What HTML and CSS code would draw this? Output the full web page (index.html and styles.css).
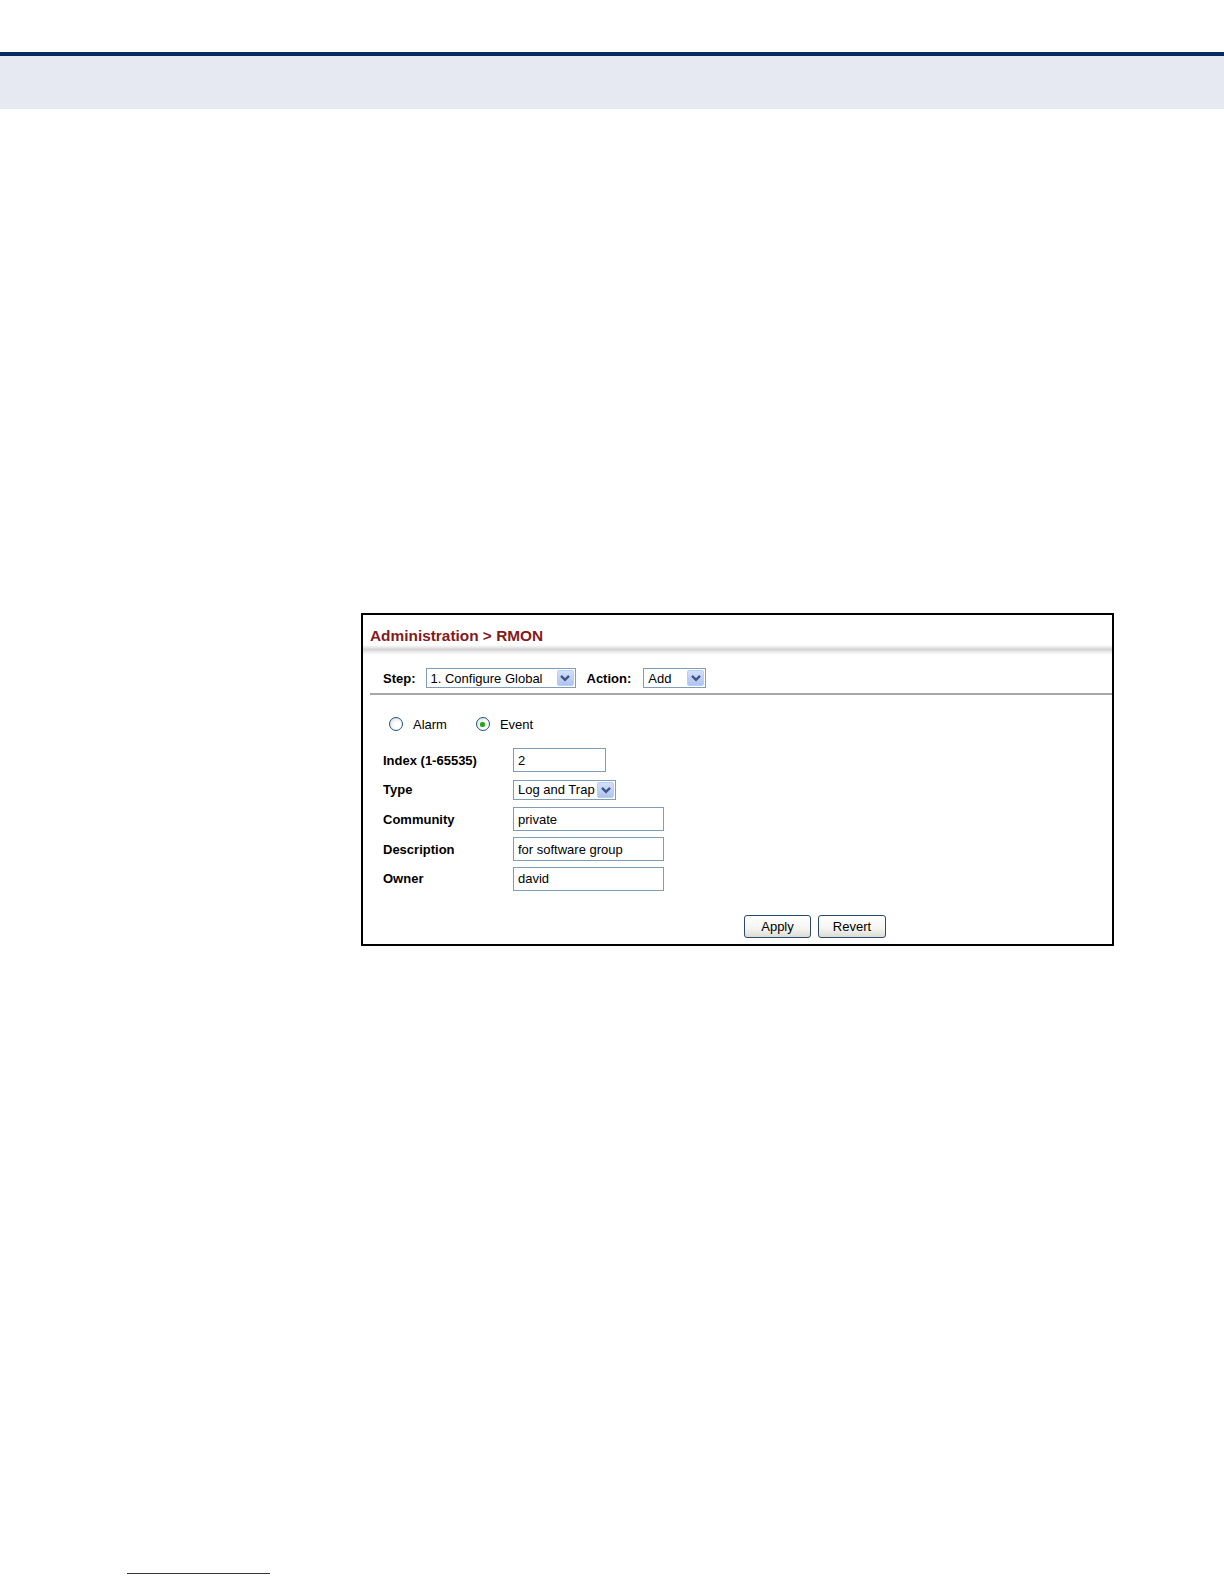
FILE: index.html
```html
<!DOCTYPE html>
<html>
<head>
<meta charset="utf-8">
<link rel="stylesheet" href="styles.css">
</head>
<body>
<div class="topline"></div>
<div class="band"></div>

<div class="panel">
  <div class="title">Administration &gt; RMON</div>
  <div class="sep"></div>
  <div class="steprow">
    <span class="lbl">Step:</span>
    <div class="select sel-step"><span class="val">1. Configure Global</span><span class="arrow"><svg width="14" height="14" viewBox="0 0 14 14"><path d="M3 4.8 L7 8.8 L11 4.8" fill="none" stroke="#3f5681" stroke-width="2.4"/></svg></span></div>
    <span class="lbl lbl-action">Action:</span>
    <div class="select sel-action"><span class="val">Add</span><span class="arrow"><svg width="14" height="14" viewBox="0 0 14 14"><path d="M3 4.8 L7 8.8 L11 4.8" fill="none" stroke="#3f5681" stroke-width="2.4"/></svg></span></div>
  </div>

  <div class="radios">
    <span class="radio"></span><span class="rlabel">Alarm</span>
    <span class="radio on"><span class="dot"></span></span><span class="rlabel">Event</span>
  </div>

  <div class="form">
    <div class="flabel">Index (1-65535)</div>
    <div class="input w-index">2</div>
    <div class="flabel">Type</div>
    <div class="cell"><div class="select sel-type"><span class="val">Log and Trap</span><span class="arrow"><svg width="14" height="14" viewBox="0 0 14 14"><path d="M3 4.8 L7 8.8 L11 4.8" fill="none" stroke="#3f5681" stroke-width="2.4"/></svg></span></div></div>
    <div class="flabel">Community</div>
    <div class="input w-long">private</div>
    <div class="flabel">Description</div>
    <div class="input w-long">for software group</div>
    <div class="flabel">Owner</div>
    <div class="input w-long">david</div>
  </div>

  <div class="buttons">
    <div class="btn btn-apply">Apply</div>
    <div class="btn btn-revert">Revert</div>
  </div>
</div>

<div class="footline"></div>
</body>
</html>
```

FILE: styles.css
```css
html, body {
  margin: 0;
  padding: 0;
  background: #ffffff;
}
body {
  font-family: "Liberation Sans", Arial, sans-serif;
  color: #000;
}
.topline {
  margin-top: 52px;
  height: 4px;
  background: #052a5f;
}
.band {
  height: 53px;
  background: #e6e9f1;
}
.panel {
  margin: 504px 0 0 361px;
  width: 749px;
  height: 329px;
  border: 2px solid #000;
}
.title {
  margin-left: 7px;
  padding-top: 11px;
  height: 19px;
  line-height: 20px;
  font-size: 15.4px;
  font-weight: bold;
  color: #841a1c;
}
.sep {
  height: 10px;
  background: linear-gradient(#ffffff 0%, #d4d4d4 45%, #ebebeb 70%, #ffffff 100%);
}
.steprow {
  margin-left: 7px;
  display: flex;
  align-items: center;
  height: 20px;
  padding: 13px 0 5px 13px;
  border-bottom: 2px solid #a7a7a7;
  font-size: 13px;
}
.lbl {
  font-weight: bold;
  margin-right: 10px;
}
.lbl-action {
  margin-left: 11px;
  margin-right: 12px;
}
.select {
  box-sizing: border-box;
  height: 20px;
  border: 1px solid #7f9db9;
  display: flex;
  align-items: center;
  justify-content: space-between;
  background: #fff;
  font-size: 13px;
}
.select .val {
  padding-left: 4px;
  white-space: nowrap;
}
.select .arrow {
  box-sizing: border-box;
  width: 17px;
  height: 16px;
  margin-right: 1px;
  border: 1px solid #bccdf3;
  border-radius: 2px;
  background: linear-gradient(#d3e0fb, #aec3f0);
  display: flex;
  align-items: center;
  justify-content: center;
}
.sel-step { width: 150px; }
.sel-action { width: 63px; }
.sel-type { width: 103px; }
.radios {
  display: flex;
  align-items: center;
  height: 20px;
  padding: 19px 0 0 26px;
  font-size: 13px;
}
.radio {
  box-sizing: border-box;
  width: 14px;
  height: 14px;
  border: 1px solid #1d5281;
  border-radius: 50%;
  background: radial-gradient(circle at 65% 65%, #ffffff 30%, #d8d8d0 100%);
  display: flex;
  align-items: center;
  justify-content: center;
}
.radio .dot {
  width: 5px;
  height: 5px;
  border-radius: 50%;
  background: #27a51f;
  box-shadow: 0 0 1px #5fc95a;
}
.rlabel {
  margin-left: 10px;
  margin-right: 29px;
}
.form {
  display: grid;
  grid-template-columns: 130px auto;
  grid-auto-rows: 24px;
  row-gap: 5.7px;
  margin: 14px 0 0 20px;
  font-size: 13px;
}
.flabel {
  font-weight: bold;
  display: flex;
  align-items: center;
}
.cell {
  display: flex;
  align-items: center;
}
.input {
  box-sizing: border-box;
  height: 24px;
  border: 1px solid #7f9db9;
  padding-left: 4px;
  display: flex;
  align-items: center;
  background: #fff;
}
.w-index { width: 93px; }
.w-long { width: 151px; }
.buttons {
  display: flex;
  gap: 7px;
  margin: 24px 0 0 381px;
}
.btn {
  box-sizing: border-box;
  height: 23px;
  border: 1px solid #2b4a6e;
  border-radius: 3px;
  background: linear-gradient(#ffffff 0%, #f4f4f0 60%, #dcdcd4 100%);
  font-size: 13px;
  display: flex;
  align-items: center;
  justify-content: center;
}
.btn-apply { width: 67px; }
.btn-revert { width: 68px; }
.footline {
  margin: 627px 0 0 127px;
  width: 143px;
  height: 1px;
  background: #333;
}
```
